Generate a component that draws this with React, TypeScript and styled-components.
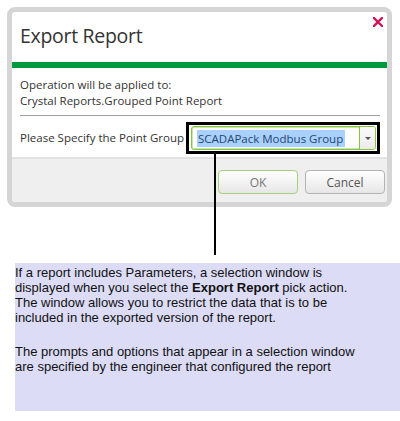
import React from "react";
import styled, { createGlobalStyle } from "styled-components";

const Global = createGlobalStyle`
  html, body { margin: 0; padding: 0; background: #ffffff; }
  body { width: 400px; height: 421px; overflow: hidden; }
`;

const Page = styled.div`
  position: relative;
  width: 400px;
  height: 421px;
  display: flex;
  flex-direction: column;
`;

const Dialog = styled.div`
  margin: 7px 0 0 7px;
  width: 385px;
  height: 200px;
  box-sizing: border-box;
  border: 5px solid #d5d5d5;
  border-radius: 8px;
  background: #ffffff;
  display: flex;
  flex-direction: column;
  font-family: "Open Sans", "Noto Sans", sans-serif;
  color: #333333;
  overflow: visible;
`;

const Header = styled.div`
  position: relative;
  height: 50px;
  display: flex;
  align-items: center;
  padding: 0 0 3px 8px;
  box-sizing: border-box;
`;

const Title = styled.h1`
  margin: 0;
  font-weight: 400;
  font-size: 19.5px;
  letter-spacing: -0.3px;
  color: #333333;
`;

const CloseButton = styled.button`
  position: absolute;
  top: 5px;
  right: 4px;
  width: 10px;
  height: 10px;
  padding: 0;
  border: 0;
  background: transparent;
  display: flex;
`;

const GreenBar = styled.div`
  height: 6px;
  background: #009a3e;
`;

const Body = styled.div`
  padding: 9px 7px 0 8px;
  flex: 1;
  font-size: 11.5px;
  line-height: 16px;
`;

const Info = styled.div`
  padding-bottom: 6px;
  border-bottom: 1px solid #a0a0a0;
`;

const Row = styled.div`
  display: flex;
  align-items: center;
  margin-top: 6px;
  gap: 2px;
`;

const Label = styled.span`
  white-space: nowrap;
`;

const Highlight = styled.div`
  position: relative;
  border: 3px solid #000000;
  padding: 1px 1px 1px 2px;
  width: 191px;
`;

const Connector = styled.div`
  position: absolute;
  top: 100%;
  left: 25px;
  width: 2px;
  height: 104px;
  background: #000000;
`;

const Combo = styled.div`
  height: 24px;
  box-sizing: border-box;
  border: 1px solid #86c43f;
  border-radius: 3px;
  display: flex;
  align-items: stretch;
  background: #ffffff;
  box-shadow: inset 0 0 0 1px #c9e6a8;
`;

const ComboValue = styled.div`
  flex: 1;
  display: flex;
  align-items: center;
  padding-left: 5px;
`;

const Selected = styled.span`
  background: #a9d1ff;
  color: #24456e;
  font-size: 11.5px;
  line-height: 17px;
  padding: 0 2px 0 1px;
`;

const ComboButton = styled.div`
  width: 15px;
  border-left: 1px solid #86c43f;
  background: linear-gradient(#fbfbfb, #eaeaea);
  border-radius: 0 2px 2px 0;
  display: flex;
  align-items: center;
  justify-content: center;
`;

const Arrow = styled.span`
  width: 0;
  height: 0;
  border-left: 3px solid transparent;
  border-right: 3px solid transparent;
  border-top: 3px solid #555555;
`;

const Footer = styled.div`
  height: 45px;
  box-sizing: border-box;
  background: #efefef;
  border-top: 2px solid #e2e2e2;
  display: flex;
  justify-content: flex-end;
  align-items: flex-start;
  padding: 11px 2px 0 0;
  gap: 7px;
  border-radius: 0 0 3px 3px;
`;

const Button = styled.button<{ $primary?: boolean }>`
  width: 80px;
  height: 24px;
  border-radius: 4px;
  border: 1px solid ${(p) => (p.$primary ? "#a6d07a" : "#b4b4b4")};
  background: linear-gradient(#ffffff, #e6e6e6);
  font-family: "Open Sans", "Noto Sans", sans-serif;
  font-size: 12px;
  color: ${(p) => (p.$primary ? "#777777" : "#555555")};
  padding: 0;
`;

const Note = styled.div`
  margin: 56px 0 0 15px;
  width: 385px;
  height: 148px;
  box-sizing: border-box;
  background: #dcdcf6;
  padding: 2px 0 0 0;
  font-family: "Liberation Sans", Arial, sans-serif;
  font-size: 13px;
  line-height: 15px;
  color: #111111;
`;

const Para = styled.p`
  margin: 0 0 19px 0;
`;

export default function App() {
  return (
    <Page>
      <Global />
      <Dialog>
        <Header>
          <Title>Export Report</Title>
          <CloseButton aria-label="Close">
            <svg width="10" height="10" viewBox="0 0 10 10">
              <path d="M1 1 L9 9 M9 1 L1 9" stroke="#d0145a" strokeWidth="2.4" strokeLinecap="square" />
            </svg>
          </CloseButton>
        </Header>
        <GreenBar />
        <Body>
          <Info>
            Operation will be applied to:
            <br />
            Crystal Reports.Grouped Point Report
          </Info>
          <Row>
            <Label>Please Specify the Point Group</Label>
            <Highlight>
              <Combo>
                <ComboValue>
                  <Selected>SCADAPack Modbus Group</Selected>
                </ComboValue>
                <ComboButton>
                  <Arrow />
                </ComboButton>
              </Combo>
              <Connector />
            </Highlight>
          </Row>
        </Body>
        <Footer>
          <Button $primary>OK</Button>
          <Button>Cancel</Button>
        </Footer>
      </Dialog>
      <Note>
        <Para>
          If a report includes Parameters, a selection window is
          <br />
          displayed when you select the <b>Export Report</b> pick action.
          <br />
          The window allows you to restrict the data that is to be
          <br />
          included in the exported version of the report.
        </Para>
        <Para>
          The prompts and options that appear in a selection window
          <br />
          are specified by the engineer that configured the report
        </Para>
      </Note>
    </Page>
  );
}
